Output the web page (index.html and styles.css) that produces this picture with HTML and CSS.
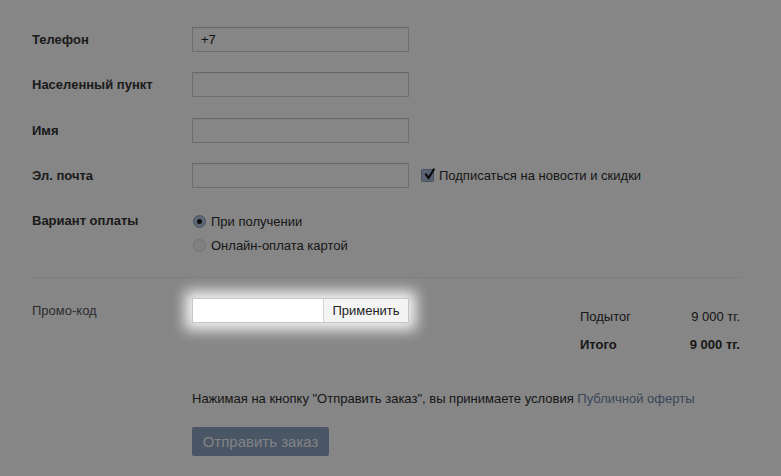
FILE: index.html
```html
<!DOCTYPE html>
<html lang="ru">
<head>
<meta charset="utf-8">
<link rel="stylesheet" href="styles.css">
</head>
<body>
<div class="page">
  <form class="order">
    <div class="row">
      <div class="label">Телефон</div>
      <div class="field"><input class="input" type="text" value="+7"></div>
    </div>
    <div class="row">
      <div class="label">Населенный пункт</div>
      <div class="field"><input class="input" type="text"></div>
    </div>
    <div class="row">
      <div class="label">Имя</div>
      <div class="field"><input class="input" type="text"></div>
    </div>
    <div class="row">
      <div class="label">Эл. почта</div>
      <div class="field">
        <input class="input" type="text">
        <label class="check">
          <span class="checkbox">
            <svg viewBox="0 0 13 13" width="13" height="13"><path d="M3 6.5 L5.6 10 L10.8 1.5" fill="none" stroke="#1a1a1a" stroke-width="2.2" stroke-linecap="round" stroke-linejoin="round"/></svg>
          </span>
          Подписаться на новости и скидки
        </label>
      </div>
    </div>
    <div class="row row-pay">
      <div class="label">Вариант оплаты</div>
      <div class="radios">
        <label class="radio-opt"><span class="radio radio-on"></span>При получении</label>
        <label class="radio-opt"><span class="radio"></span>Онлайн-оплата картой</label>
      </div>
    </div>

    <div class="sep"></div>

    <div class="totals-row">
      <div class="promo-label">Промо-код</div>
      <div class="promo-col">
        <div class="promo">
          <input class="promo-input" type="text">
          <button class="promo-btn" type="button">Применить</button>
        </div>
      </div>
      <div class="summary">
        <div class="sum-line"><span>Подытог</span><span>9 000 тг.</span></div>
        <div class="sum-line sum-total"><span>Итого</span><span>9 000 тг.</span></div>
      </div>
    </div>

    <div class="submit-block">
      <p class="terms">Нажимая на кнопку "Отправить заказ", вы принимаете условия <a class="link" href="#">Публичной оферты</a></p>
      <button class="submit" type="button">Отправить заказ</button>
    </div>
  </form>
</div>
<div class="overlay"></div>
</body>
</html>
```
FILE: styles.css
```css
* { box-sizing: border-box; }
html, body { margin: 0; padding: 0; }
body {
  background: #ffffff;
  font-family: "Liberation Sans", Arial, sans-serif;
  font-size: 13px;
  color: #343434;
  width: 781px;
  height: 476px;
  overflow: hidden;
}
.page {
  padding: 27px 40px 0 32px;
}
.order { display: flex; flex-direction: column; }
.row {
  display: flex;
  align-items: center;
  height: 25px;
  margin-bottom: 20.33px;
}
.label {
  width: 160px;
  font-weight: bold;
  flex: none;
}
.field { display: flex; align-items: center; }
.input {
  width: 217px;
  height: 25px;
  border: 1px solid #d2d2d2;
  border-top-color: #c4c4c4;
  background: #fff;
  font: 13px "Liberation Sans", Arial, sans-serif;
  color: #222;
  padding: 0 8px;
  margin: 0;
  box-shadow: inset 0 1px 1px rgba(0,0,0,0.05);
}
.check {
  display: flex;
  align-items: center;
  margin-left: 12px;
  color: #2e2e2e;
}
.checkbox {
  width: 13px;
  height: 13px;
  background: #a9bcdb;
  border: 1px solid #8c9ab4;
  border-radius: 2px;
  margin-right: 5px;
  display: flex;
  align-items: center;
  justify-content: center;
  position: relative;
}
.checkbox svg { position: absolute; left: 1px; top: -2px; }
.row-pay {
  height: auto;
  align-items: flex-start;
  margin-bottom: 0;
  padding-top: 1px;
}
.row-pay .label { line-height: 24px; }
.radios { display: flex; flex-direction: column; }
.radio-opt {
  display: flex;
  align-items: center;
  height: 24px;
  color: #2e2e2e;
}
.radio {
  width: 13px;
  height: 13px;
  border-radius: 50%;
  border: 1px solid #dadada;
  background: #f3f3f3;
  margin: 0 5px 0 1px;
  display: flex;
  align-items: center;
  justify-content: center;
}
.radio-on {
  background: #b3c3de;
  border-color: #8d9bb5;
}
.radio-on::after {
  content: "";
  width: 5px;
  height: 5px;
  border-radius: 50%;
  background: #1c1c1c;
}
.sep {
  height: 1px;
  background: #efefef;
  margin: 20px 0 20px 0;
}
.totals-row {
  display: flex;
  align-items: flex-start;
}
.promo-label {
  width: 160px;
  flex: none;
  color: #555;
  line-height: 26px;
}
.promo-col { width: 388px; flex: none; }
.promo {
  position: relative;
  z-index: 10;
  display: flex;
  width: 217px;
  height: 25px;
  border: 1px solid #c6c6c6;
  background: #fff;
  box-shadow: 0 0 14px 7px rgba(255,255,255,0.9);
}
.promo-input {
  flex: 1;
  min-width: 0;
  border: 0;
  border-right: 1px solid #d4d4d4;
  background: #fff;
  margin: 0;
  padding: 0 6px;
  font: 13px "Liberation Sans", Arial, sans-serif;
}
.promo-btn {
  width: 84px;
  border: 0;
  background: #f4f4f4;
  font: 13px "Liberation Sans", Arial, sans-serif;
  color: #222;
  padding: 0;
  margin: 0;
}
.summary {
  flex: 1;
  padding-top: 5px;
  color: #2e2e2e;
}
.sum-line {
  display: flex;
  justify-content: space-between;
  line-height: 28px;
  padding-right: 1px;
}
.sum-total { font-weight: bold; }
.submit-block {
  padding-left: 160px;
  margin-top: 29px;
}
.terms {
  margin: 0;
  line-height: 22px;
  color: #2e2e2e;
}
.link { color: #6f86aa; text-decoration: none; }
.submit {
  margin-top: 17px;
  width: 137px;
  height: 29px;
  border: 0;
  border-radius: 2px;
  background: #8da3c2;
  color: rgba(255,255,255,0.95);
  font: 15px "Liberation Sans", Arial, sans-serif;
  padding: 0;
}
.overlay {
  position: fixed;
  inset: 0;
  background: rgba(0,0,0,0.475);
  z-index: 5;
}
```
